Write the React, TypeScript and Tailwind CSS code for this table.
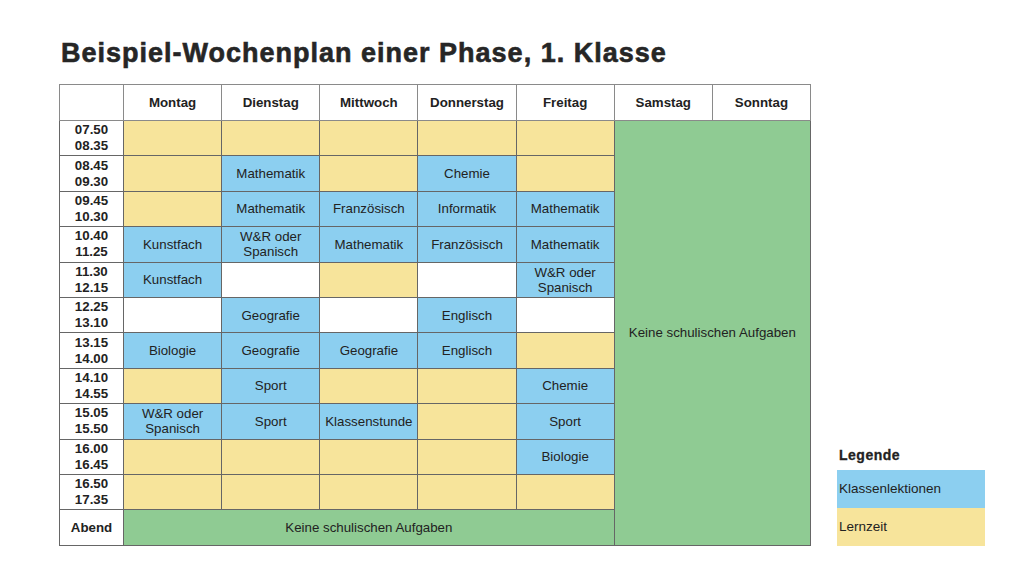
import React from "react";

type Cell = { t?: string; c: "y" | "b" | "w" };

const Y: Cell = { c: "y" };
const W: Cell = { c: "w" };
const b = (t: string): Cell => ({ t, c: "b" });

const days = ["Montag", "Dienstag", "Mittwoch", "Donnerstag", "Freitag", "Samstag", "Sonntag"];

const rows: [string, string, Cell[]][] = [
	["07.50", "08.35", [Y, Y, Y, Y, Y]],
	["08.45", "09.30", [Y, b("Mathematik"), Y, b("Chemie"), Y]],
	["09.45", "10.30", [Y, b("Mathematik"), b("Französisch"), b("Informatik"), b("Mathematik")]],
	["10.40", "11.25", [b("Kunstfach"), b("W&R oder Spanisch"), b("Mathematik"), b("Französisch"), b("Mathematik")]],
	["11.30", "12.15", [b("Kunstfach"), W, Y, W, b("W&R oder Spanisch")]],
	["12.25", "13.10", [W, b("Geografie"), W, b("Englisch"), W]],
	["13.15", "14.00", [b("Biologie"), b("Geografie"), b("Geografie"), b("Englisch"), Y]],
	["14.10", "14.55", [Y, b("Sport"), Y, Y, b("Chemie")]],
	["15.05", "15.50", [b("W&R oder Spanisch"), b("Sport"), b("Klassenstunde"), Y, b("Sport")]],
	["16.00", "16.45", [Y, Y, Y, Y, b("Biologie")]],
	["16.50", "17.35", [Y, Y, Y, Y, Y]],
];

const bg = { y: "bg-[#f7e49b]", b: "bg-[#8ccff0]", w: "bg-white" };

export default function App() {
	return (
		<div className="w-[1024px] h-[572px] bg-white text-[#222] font-['Liberation_Sans',Arial,sans-serif] pl-[59px] pt-[38px]">
			<h1 className="text-[27px] leading-[30px] font-bold tracking-[1px] text-[#262626] pl-[2px] [-webkit-text-stroke:0.6px_#262626]">
				Beispiel-Wochenplan einer Phase, 1. Klasse
			</h1>
			<div className="flex items-end gap-[26px] mt-[16px]">
				<table className="table-fixed border-collapse w-[752px] text-[13.3px] leading-[15px]">
					<colgroup>
						<col className="w-[64px]" />
						{days.map((d) => (
							<col key={d} />
						))}
					</colgroup>
					<thead>
						<tr className="h-[36px]">
							<th className="border border-[#8a8a8a] bg-white"></th>
							{days.map((d) => (
								<th key={d} className="border border-[#8a8a8a] bg-white font-bold text-center">
									{d}
								</th>
							))}
						</tr>
					</thead>
					<tbody>
						{rows.map(([a, z, cells], i) => (
							<tr key={a} className="h-[35.4px]">
								<td className="border border-[#666] bg-white font-bold text-center leading-[16px]">
									{a}
									<br />
									{z}
								</td>
								{cells.map((c, j) => (
									<td key={j} className={`border border-[#666] text-center px-1 ${bg[c.c]}`}>
										{c.t}
									</td>
								))}
								{i === 0 && (
									<td rowSpan={12} colSpan={2} className="border border-[#666] bg-[#8fcb93] text-center">
										Keine schulischen Aufgaben
									</td>
								)}
							</tr>
						))}
						<tr className="h-[35.4px]">
							<td className="border border-[#666] bg-white font-bold text-center">Abend</td>
							<td colSpan={5} className="border border-[#666] bg-[#8fcb93] text-center">
								Keine schulischen Aufgaben
							</td>
						</tr>
					</tbody>
				</table>
				<div className="w-[148px] text-[13.5px]">
					<div className="font-bold text-[14px] tracking-[0.5px] pl-[2px] pb-[4px] [-webkit-text-stroke:0.3px_#222]">Legende</div>
					<div className="h-[38px] bg-[#8ccff0] flex items-center pl-[2px]">Klassenlektionen</div>
					<div className="h-[38px] bg-[#f7e49b] flex items-center pl-[2px]">Lernzeit</div>
				</div>
			</div>
		</div>
	);
}
